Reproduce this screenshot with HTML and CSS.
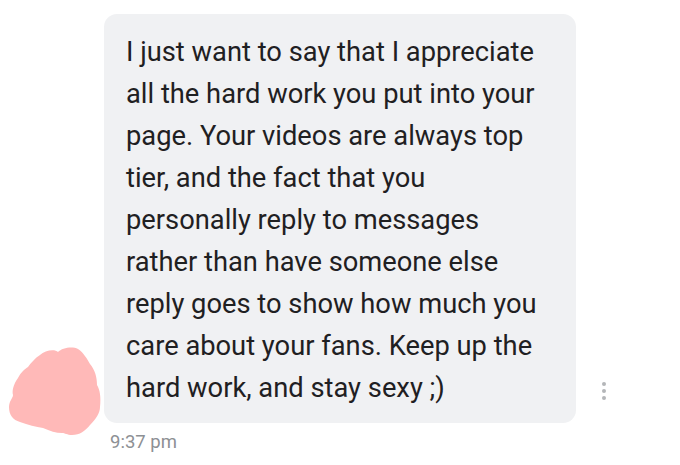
FILE: index.html
```html
<!DOCTYPE html>
<html>
<head>
<meta charset="utf-8">
<link rel="stylesheet" href="styles.css">
</head>
<body>
<div class="thread">
  <div class="row">
    <div class="avatar">
      <svg width="104" height="92" viewBox="0 0 104 92" class="blob">
        <path fill="#ffb9b8" d="M40,10 C45,5 55,4 58,7 C62,3 72,1 78,4 C84,8 87,14 90,19 C95,25 97,32 97,40 C100,45 101,52 100,62 C100,68 96,74 90,80 C85,86 80,90 72,90 C67,90 65,88 62,88 C56,88 50,86 43,83 C36,82 28,80 20,77 C13,75 9,70 9,62 C9,56 13,53 13,50 C12,46 13,40 18,33 C21,27 25,24 28,22 C31,18 35,13 40,10 Z"/>
      </svg>
    </div>
    <div class="bubble">I just want to say that I appreciate<br>all the hard work you put into your<br>page. Your videos are always top<br>tier, and the fact that you<br>personally reply to messages<br>rather than have someone else<br>reply goes to show how much you<br>care about your fans. Keep up the<br>hard work, and stay sexy ;)</div>
    <div class="more">
      <span class="dot"></span><span class="dot"></span><span class="dot"></span>
    </div>
  </div>
  <div class="time">9:37 pm</div>
</div>
</body>
</html>
```
FILE: styles.css
```css
html, body {
  margin: 0;
  padding: 0;
  background: #ffffff;
}
body {
  width: 680px;
  height: 465px;
  overflow: hidden;
  font-family: Roboto, "Liberation Sans", sans-serif;
}
.thread {
  padding-top: 14px;
}
.row {
  display: flex;
  align-items: flex-end;
}
.avatar {
  width: 104px;
  flex: none;
  display: flex;
  align-items: flex-end;
}
.blob {
  display: block;
  margin-bottom: -14px;
}
.bubble {
  width: 428px;
  flex: none;
  white-space: nowrap;
  background: #f0f1f3;
  border-radius: 13px;
  padding: 17px 22px 14px 22px;
  font-size: 27.3px;
  line-height: 42px;
  color: #1f2022;
}
.more {
  display: flex;
  flex-direction: column;
  gap: 3px;
  margin-left: 26px;
  margin-bottom: 23px;
}
.dot {
  width: 4px;
  height: 4px;
  border-radius: 50%;
  background: #b4b6b9;
}
.time {
  margin-left: 110px;
  margin-top: 8px;
  font-size: 18.5px;
  color: #8d9094;
}
```
